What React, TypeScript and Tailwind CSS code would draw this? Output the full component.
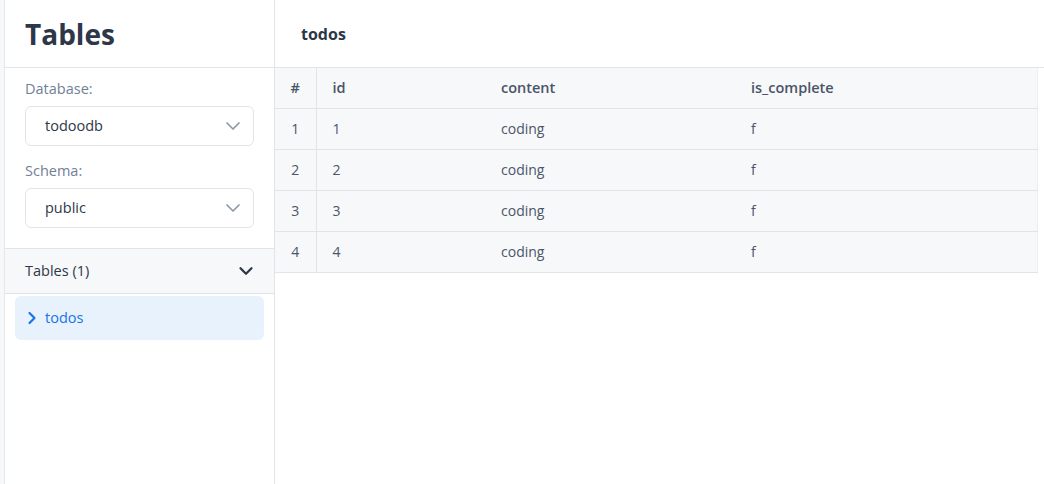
import { ChevronDown, ChevronRight } from 'lucide-react'

const rows = [
  { id: 1, content: 'coding', done: 'f' },
  { id: 2, content: 'coding', done: 'f' },
  { id: 3, content: 'coding', done: 'f' },
  { id: 4, content: 'coding', done: 'f' },
]

function Select({ value }: { value: string }) {
  return (
    <div className="flex items-center justify-between h-10 rounded-md border border-[#e2e4e8] bg-white pl-[19px] pr-[8px] text-[14.5px] text-[#2d3748]">
      <span>{value}</span>
      <ChevronDown size={24} strokeWidth={1.7} className="text-[#8f98a6]" />
    </div>
  )
}

export default function App() {
  return (
    <div className="flex h-[484px] bg-white text-[#2d3748]" style={{ fontFamily: '"Open Sans", sans-serif' }}>
      <div className="w-[5px] bg-[#f7f8fa] border-r border-[#e5e7eb] shrink-0" />

      <aside className="w-[270px] shrink-0 border-r border-[#e2e4e8] flex flex-col">
        <div className="h-[68px] border-b border-[#e2e4e8] flex items-center px-5">
          <h1 className="text-[28px] font-bold text-[#2d3748]">Tables</h1>
        </div>
        <div className="px-5 pt-[10px] pb-5 border-b border-[#e2e4e8]">
          <label className="block text-[14.5px] leading-[22px] text-[#718096] mb-[6px]">Database:</label>
          <Select value="todoodb" />
          <label className="block text-[14.5px] leading-[22px] text-[#718096] mt-[14px] mb-[6px]">Schema:</label>
          <Select value="public" />
        </div>
        <div className="h-[45px] bg-[#f7f8fa] border-b border-[#e2e4e8] flex items-center justify-between px-5">
          <span className="text-[14.5px] text-[#2d3748]">Tables (1)</span>
          <ChevronDown size={22} strokeWidth={2.5} className="text-[#2d3748] mr-[-3px]" />
        </div>
        <div className="px-[10px] pt-[2px]">
          <div className="h-11 rounded-md bg-[#e7f2fd] flex items-center gap-[3px] pl-[7px] text-[14.5px] text-[#1a73e8]">
            <ChevronRight size={20} strokeWidth={2.6} />
            <span>todos</span>
          </div>
        </div>
      </aside>

      <main className="flex-1 flex flex-col min-w-0">
        <div className="h-[68px] border-b border-[#e2e4e8] flex items-center px-[26px]">
          <h2 className="text-[16px] font-bold text-[#2d3748]">todos</h2>
        </div>
        <div className="pr-[6px]">
          <table className="w-full text-[14px] bg-[#f7f8fa] border-r border-[#eceef1] border-collapse">
            <thead>
              <tr className="h-10 border-b border-[#e2e4e8] text-[14.5px]">
                <th className="w-[41px] border-r border-[#e2e4e8] font-semibold text-[#4a5568] text-center">#</th>
                <th className="w-[169px] text-left pl-4 font-semibold text-[#4a5568]">id</th>
                <th className="w-[250px] text-left pl-4 font-semibold text-[#4a5568]">content</th>
                <th className="text-left pl-4 font-semibold text-[#4a5568]">is_complete</th>
              </tr>
            </thead>
            <tbody>
              {rows.map((r, i) => (
                <tr key={r.id} className="h-[41px] border-b border-[#e2e4e8]">
                  <td className="border-r border-[#e2e4e8] text-center text-[#4a5568]">{i + 1}</td>
                  <td className="pl-4 text-[#4a5568]">{r.id}</td>
                  <td className="pl-4 text-[#4a5568]">{r.content}</td>
                  <td className="pl-4 text-[#4a5568]">{r.done}</td>
                </tr>
              ))}
            </tbody>
          </table>
        </div>
      </main>
    </div>
  )
}
